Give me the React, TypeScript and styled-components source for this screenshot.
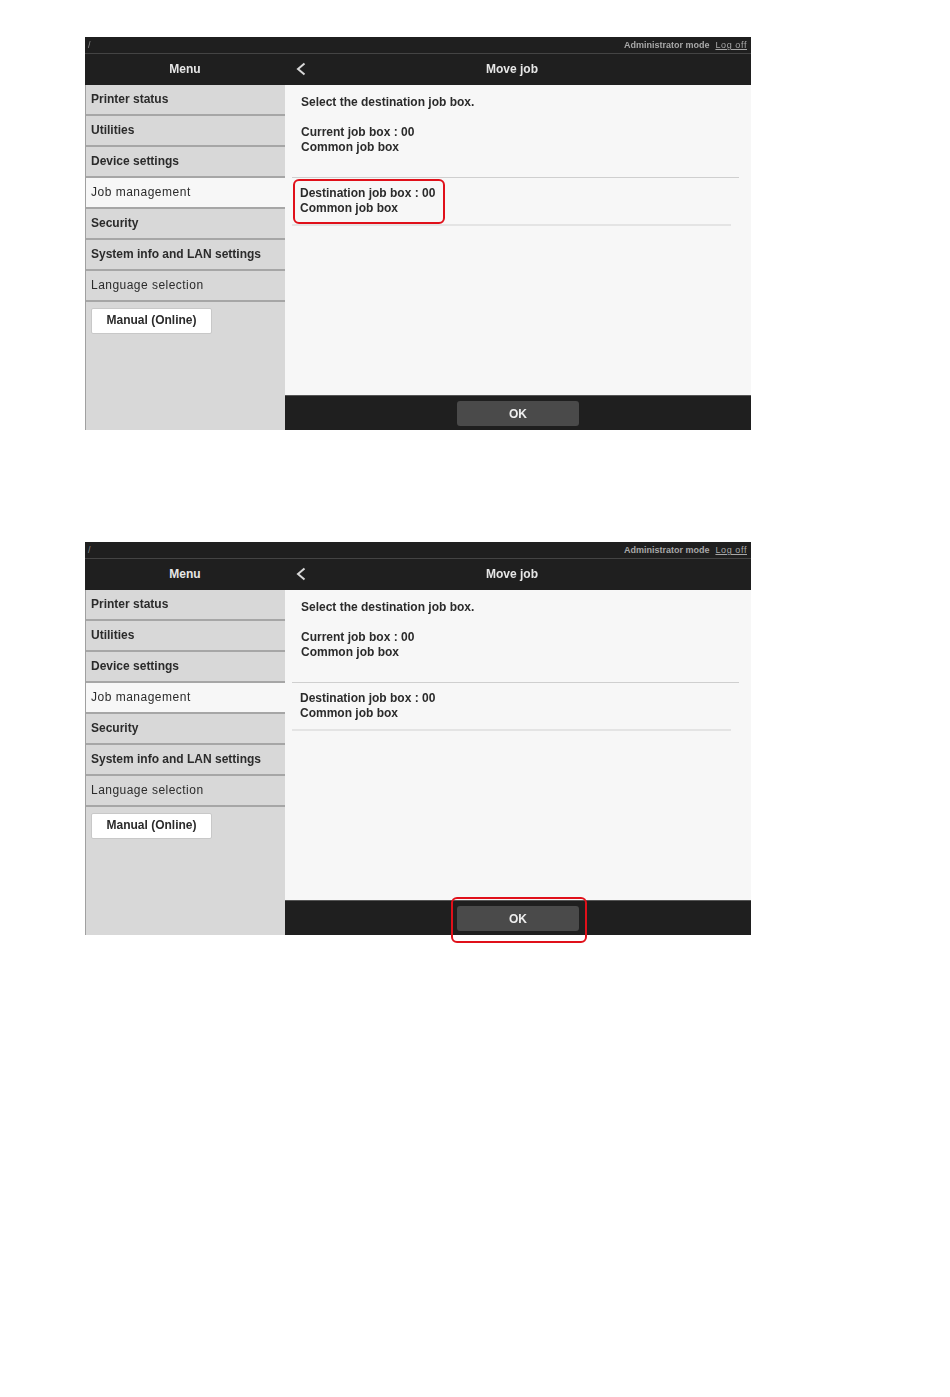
import React from 'react';
import styled, { createGlobalStyle } from 'styled-components';

const menuItems = [
  'Printer status',
  'Utilities',
  'Device settings',
  'Job management',
  'Security',
  'System info and LAN settings',
  'Language selection',
];

const PanelScreen: React.FunctionComponent<{ markDestination?: boolean; markOk?: boolean }> = ({
  markDestination,
  markOk,
}) => (
  <Screen>
    <StatusBar>
      <Crumb>/</Crumb>
      <StatusRight>
        <span>Administrator mode</span>
        <LogOff>Log off</LogOff>
      </StatusRight>
    </StatusBar>
    <HeaderRow>
      <MenuTitle>Menu</MenuTitle>
      <PageTitle>
        <BackIcon viewBox="0 0 10 14">
          <path d="M8.5 1.5 L2 7 L8.5 12.5" fill="none" stroke="#d8d8d8" strokeWidth="2" />
        </BackIcon>
        <TitleText>Move job</TitleText>
      </PageTitle>
    </HeaderRow>
    <Body>
      <Sidebar>
        {menuItems.map((item) => (
          <MenuItem key={item} $active={item === 'Job management'} $light={item === 'Language selection'}>
            {item}
          </MenuItem>
        ))}
        <ManualButton>Manual (Online)</ManualButton>
      </Sidebar>
      <Main>
        <Content>
          <Prompt>Select the destination job box.</Prompt>
          <CurrentBox>
            Current job box : 00
            <br />
            Common job box
          </CurrentBox>
          <Destination>
            Destination job box : 00
            <br />
            Common job box
            {markDestination && <DestinationMark />}
          </Destination>
        </Content>
        <Footer>
          <OkButton>
            OK
            {markOk && <OkMark />}
          </OkButton>
        </Footer>
      </Main>
    </Body>
  </Screen>
);

export default function App() {
  return (
    <>
      <GlobalStyle />
      <Page>
        <PanelScreen markDestination />
        <PanelScreen markOk />
      </Page>
    </>
  );
}

const GlobalStyle = createGlobalStyle`
  html, body {
    margin: 0;
    background: #fff;
  }
  body {
    font-family: "Liberation Sans", Arial, sans-serif;
  }
`;

const Page = styled.div`
  width: 950px;
  height: 1397px;
  padding: 37px 0 0 85px;
  box-sizing: border-box;
  display: flex;
  flex-direction: column;
  gap: 112px;
`;

const Screen = styled.div`
  width: 666px;
  height: 393px;
  display: flex;
  flex-direction: column;
  filter: blur(0.4px);
`;

const StatusBar = styled.div`
  height: 16px;
  flex: none;
  background: #1f1f1f;
  border-bottom: 1px solid #444;
  display: flex;
  justify-content: space-between;
  align-items: center;
  padding: 0 4px 0 3px;
  color: #a8a8a8;
  font-size: 9px;
`;

const Crumb = styled.span`
  color: #888;
`;

const StatusRight = styled.div`
  display: flex;
  gap: 6px;
  font-weight: 700;
`;

const LogOff = styled.span`
  text-decoration: underline;
  font-weight: 400;
  letter-spacing: 0.6px;
`;

const HeaderRow = styled.div`
  height: 31px;
  flex: none;
  padding-bottom: 2px;
  box-sizing: border-box;
  background: #1f1f1f;
  display: flex;
  color: #e6e6e6;
  font-size: 12px;
  font-weight: 700;
`;

const MenuTitle = styled.div`
  width: 200px;
  display: flex;
  align-items: center;
  justify-content: center;
`;

const PageTitle = styled.div`
  flex: 1;
  display: flex;
  align-items: center;
  padding-left: 11px;
`;

const BackIcon = styled.svg`
  width: 10px;
  height: 14px;
  flex: none;
`;

const TitleText = styled.span`
  flex: 1;
  text-align: center;
  padding-right: 33px;
`;

const Body = styled.div`
  flex: 1;
  display: flex;
  min-height: 0;
`;

const Sidebar = styled.div`
  width: 200px;
  flex: none;
  box-sizing: border-box;
  background: #d8d8d8;
  border-left: 1px solid #a0a0a0;
  display: flex;
  flex-direction: column;
`;

const MenuItem = styled.div<{ $active?: boolean; $light?: boolean }>`
  height: 31px;
  box-sizing: border-box;
  padding: 0 0 2px 5px;
  display: flex;
  align-items: center;
  font-size: 12px;
  font-weight: ${(p) => (p.$active || p.$light ? 400 : 700)};
  letter-spacing: ${(p) => (p.$active ? '0.5px' : p.$light ? '0.47px' : '0')};
  color: #2b2b2b;
  background: ${(p) => (p.$active ? '#f7f7f7' : '#d8d8d8')};
  border-bottom: 2px solid #a6a6a6;
`;

const ManualButton = styled.div`
  margin: 6px 0 0 5px;
  width: 121px;
  height: 26px;
  box-sizing: border-box;
  padding-bottom: 2px;
  background: #fff;
  border: 1px solid #c8c8c8;
  border-radius: 2px;
  display: flex;
  align-items: center;
  justify-content: center;
  font-size: 12px;
  font-weight: 700;
  color: #2b2b2b;
`;

const Main = styled.div`
  flex: 1;
  display: flex;
  flex-direction: column;
  background: #f7f7f7;
`;

const Content = styled.div`
  flex: 1;
  padding: 10px 12px 0 16px;
  font-size: 12px;
  line-height: 15px;
  color: #2b2b2b;
`;

const Prompt = styled.div`
  font-weight: 700;
  margin-bottom: 15px;
`;

const CurrentBox = styled.div`
  font-weight: 700;
  margin-left: -9px;
  padding: 0 0 22px 9px;
  border-bottom: 1px solid #cfcfcf;
`;

const Destination = styled.div`
  position: relative;
  font-weight: 700;
  margin: 0 8px 0 -9px;
  padding: 8px 0 8px 8px;
  border-bottom: 2px solid #e4e4e4;
`;

const DestinationMark = styled.div`
  position: absolute;
  left: 1px;
  top: 1px;
  width: 152px;
  height: 45px;
  box-sizing: border-box;
  border: 2px solid #e0101a;
  border-radius: 6px;
`;

const Footer = styled.div`
  height: 35px;
  flex: none;
  background: #1f1f1f;
  border-top: 1px solid #555;
  box-sizing: border-box;
  display: flex;
  justify-content: center;
  padding: 5px 0 4px;
`;

const OkButton = styled.div`
  position: relative;
  width: 122px;
  box-sizing: border-box;
  background: #4a4a4a;
  border-radius: 3px;
  display: flex;
  align-items: center;
  justify-content: center;
  color: #eee;
  font-size: 12px;
  font-weight: 700;
`;

const OkMark = styled.div`
  position: absolute;
  left: -6px;
  top: -9px;
  width: 136px;
  height: 46px;
  box-sizing: border-box;
  border: 2px solid #e0101a;
  border-radius: 6px;
`;
